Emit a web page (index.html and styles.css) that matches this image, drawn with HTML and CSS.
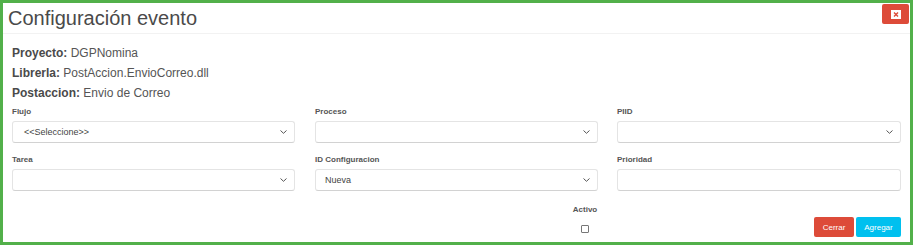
FILE: index.html
```html
<!DOCTYPE html>
<html lang="es">
<head>
<meta charset="utf-8">
<link rel="stylesheet" href="styles.css">
</head>
<body>
<div class="modal">
  <div class="modal-header">
    <h1 class="title">Configuración evento</h1>
    <button class="btn-close" type="button" aria-label="Cerrar">
      <svg width="10" height="9" viewBox="0 0 10 9"><rect x="0" y="0" width="10" height="9" fill="#fff"/><path d="M3 2.5 L7 6.5 M7 2.5 L3 6.5" stroke="#dd4b39" stroke-width="1.4"/></svg>
    </button>
  </div>
  <div class="modal-body">
    <div class="info">
      <p class="info-line"><b>Proyecto:</b> DGPNomina</p>
      <p class="info-line"><b>Librerla:</b> PostAccion.EnvioCorreo.dll</p>
      <p class="info-line"><b>Postaccion:</b> Envio de Correo</p>
    </div>
    <div class="form-grid">
      <div class="field">
        <label class="label">Flujo</label>
        <div class="select select-wide"><span class="select-text">&lt;&lt;Seleccione&gt;&gt;</span><svg class="chev" width="7" height="4" viewBox="0 0 7 4"><path d="M0.5 0.5 L3.5 3.3 L6.5 0.5" fill="none" stroke="#555" stroke-width="1"/></svg></div>
      </div>
      <div class="field">
        <label class="label">Proceso</label>
        <div class="select"><span class="select-text"></span><svg class="chev" width="7" height="4" viewBox="0 0 7 4"><path d="M0.5 0.5 L3.5 3.3 L6.5 0.5" fill="none" stroke="#555" stroke-width="1"/></svg></div>
      </div>
      <div class="field">
        <label class="label">PIID</label>
        <div class="select"><span class="select-text"></span><svg class="chev" width="7" height="4" viewBox="0 0 7 4"><path d="M0.5 0.5 L3.5 3.3 L6.5 0.5" fill="none" stroke="#555" stroke-width="1"/></svg></div>
      </div>
      <div class="field">
        <label class="label">Tarea</label>
        <div class="select"><span class="select-text"></span><svg class="chev" width="7" height="4" viewBox="0 0 7 4"><path d="M0.5 0.5 L3.5 3.3 L6.5 0.5" fill="none" stroke="#555" stroke-width="1"/></svg></div>
      </div>
      <div class="field">
        <label class="label">ID Configuracion</label>
        <div class="select"><span class="select-text">Nueva</span><svg class="chev" width="7" height="4" viewBox="0 0 7 4"><path d="M0.5 0.5 L3.5 3.3 L6.5 0.5" fill="none" stroke="#555" stroke-width="1"/></svg></div>
      </div>
      <div class="field">
        <label class="label">Prioridad</label>
        <div class="input"></div>
      </div>
      <div class="field"></div>
      <div class="field field-check">
        <label class="label">Activo</label>
        <span class="checkbox"></span>
      </div>
      <div class="field field-actions">
        <button class="btn btn-danger" type="button">Cerrar</button>
        <button class="btn btn-info" type="button">Agregar</button>
      </div>
    </div>
  </div>
</div>
</body>
</html>
```

FILE: styles.css
```css
* { box-sizing: border-box; }
html, body { margin: 0; padding: 0; background: #fff; }
body { font-family: "Liberation Sans", Arial, sans-serif; color: #555; }

.modal {
  width: 913px;
  height: 245px;
  border: 3px solid #52b04a;
  background: #fff;
}

.modal-header {
  height: 31px;
  border-bottom: 1px solid #f2f2f2;
  display: flex;
  justify-content: space-between;
  align-items: flex-start;
  padding: 0 1px 0 5px;
}
.title {
  margin: 1px 0 0 0;
  font-size: 20px;
  line-height: 28px;
  font-weight: normal;
  color: #4a4a4a;
}
.btn-close {
  margin-top: 1px;
  width: 27px;
  height: 20px;
  border: 0;
  border-radius: 2px;
  background: #dd4b39;
  display: flex;
  align-items: center;
  justify-content: center;
  padding: 0;
}
.btn-close svg { display: block; }

.modal-body { padding: 9px 10px 0 9px; }

.info-line {
  margin: 0;
  font-size: 12px;
  line-height: 20px;
  color: #555;
}
.info-line b { color: #4a4a4a; }

.form-grid {
  margin-top: 3px;
  display: grid;
  grid-template-columns: 283px 283px 283px;
  column-gap: 20px;
}
.form-grid > .field:nth-child(3n) { margin-left: -1px; }

.field { margin-bottom: 11px; }
.label {
  display: block;
  font-size: 8px;
  font-weight: bold;
  line-height: 12px;
  color: #555;
  margin-bottom: 3px;
}

.select, .input {
  height: 22px;
  border: 1px solid #e4e4e4;
  border-bottom-color: #d2d2d2;
  border-radius: 3px;
  background: #fff;
}
.select {
  display: flex;
  align-items: center;
  justify-content: space-between;
  padding: 0 7px 0 9px;
}
.select-wide { padding-left: 11px; }
.select-text {
  font-size: 9px;
  color: #444;
}
.chev { display: block; }

.field-check {
  justify-self: end;
  width: 26px;
  display: flex;
  flex-direction: column;
  align-items: center;
  margin-top: 2px;
  margin-bottom: 0;
}
.field-check .label { margin-bottom: 9px; }
.checkbox {
  display: block;
  width: 8px;
  height: 8px;
  border: 1px solid #777;
  border-radius: 1px;
}

.field-actions {
  display: flex;
  justify-content: flex-end;
  align-items: flex-start;
  gap: 2px;
  margin-top: 15px;
  margin-bottom: 0;
}
.btn {
  height: 20px;
  border: 0;
  border-radius: 2px;
  color: #fff;
  font-family: "Liberation Sans", Arial, sans-serif;
  font-size: 8px;
  padding: 0;
}
.btn-danger { background: #dd4b39; width: 40px; }
.btn-info { background: #00c0ef; width: 45px; }
```
